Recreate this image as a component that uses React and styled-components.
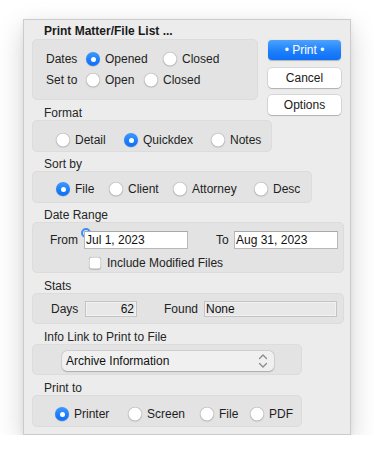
import React from 'react';
import styled, { createGlobalStyle, css } from 'styled-components';

const Global = createGlobalStyle`
  html, body { margin: 0; padding: 0; background: #ffffff; }
  body {
    font-family: "Liberation Sans", Arial, Helvetica, sans-serif;
    font-size: 12px;
    color: #222;
    -webkit-font-smoothing: antialiased;
  }
  #root { padding: 19px 0 0 23px; }
`;

const Window = styled.div`
  box-sizing: border-box;
  width: 328px;
  height: 416px;
  background: #ececec;
  border: 1px solid #cbcbcb;
  box-shadow: 0 10px 26px rgba(0, 0, 0, 0.18), 0 2px 6px rgba(0, 0, 0, 0.06);
  padding-left: 8px;
  display: grid;
  grid-template-columns: 236px 73px;
  grid-template-rows: 19px 61px 20px auto;
  align-content: start;
`;

const Title = styled.div`
  grid-column: 1;
  grid-row: 1;
  padding: 4px 0 0 12px;
  line-height: 15px;
  font-weight: bold;
  color: #1a1a1a;
`;

const SectionLabel = styled.div`
  line-height: 14px;
  height: 14px;
  padding-left: 12px;
  color: #262626;
  margin-top: ${(p) => p.$mt || 0}px;
`;

const FormatLabel = styled(SectionLabel)`
  grid-column: 1;
  grid-row: 3;
  align-self: end;
`;

const ButtonColumn = styled.div`
  grid-column: 2;
  grid-row: 1 / span 3;
  display: flex;
  flex-direction: column;
  gap: 7.5px;
  padding-top: 20px;
`;

const Button = styled.div`
  box-sizing: border-box;
  width: 73px;
  height: 20px;
  border-radius: 4px;
  display: flex;
  align-items: center;
  justify-content: center;
  font-size: 12px;
  ${(p) =>
    p.$primary
      ? css`
          color: #fff;
          background: linear-gradient(180deg, #4ba2fd 0%, #1f80fc 55%, #0d6ff6 100%);
          box-shadow: 0 0.5px 1px rgba(0, 0, 0, 0.25);
        `
      : css`
          color: #1a1a1a;
          background: #ffffff;
          box-shadow: 0 0 0 0.5px rgba(0, 0, 0, 0.18), 0 1px 1px rgba(0, 0, 0, 0.18);
        `}
`;

const Group = styled.div`
  box-sizing: border-box;
  width: ${(p) => p.$w}px;
  height: ${(p) => p.$h}px;
  padding-top: ${(p) => p.$pt || 0}px;
  background: #e3e3e3;
  border: 1px solid #dcdcdc;
  border-radius: 5px;
  display: flex;
  flex-direction: column;
`;

const DatesGroup = styled(Group)`
  grid-column: 1;
  grid-row: 2;
  gap: 7px;
`;

const Rest = styled.div`
  grid-column: 1 / -1;
  grid-row: 4;
  display: flex;
  flex-direction: column;
`;

const Row = styled.div`
  display: flex;
  align-items: center;
  height: ${(p) => p.$h || 14}px;
  padding-left: ${(p) => p.$pl || 0}px;
  margin-top: ${(p) => p.$mt || 0}px;
`;

const RowLabel = styled.div`
  flex: none;
  width: ${(p) => p.$w}px;
  margin-left: ${(p) => p.$ml || 0}px;
  color: #222;
  line-height: 14px;
`;

const OptionWrap = styled.div`
  flex: none;
  width: ${(p) => (p.$w ? `${p.$w}px` : 'auto')};
  display: flex;
  align-items: center;
  gap: 5px;
  line-height: 14px;
  color: #1e1e1e;
`;

const RadioDot = styled.span`
  flex: none;
  box-sizing: border-box;
  width: 14px;
  height: 14px;
  border-radius: 50%;
  position: relative;
  ${(p) =>
    p.$on
      ? css`
          background: linear-gradient(180deg, #3e9afd 0%, #1b7cfb 60%, #0f70f6 100%);
          box-shadow: 0 0.5px 1px rgba(0, 0, 0, 0.25);
          &::after {
            content: '';
            position: absolute;
            left: 4.5px;
            top: 4.5px;
            width: 5px;
            height: 5px;
            border-radius: 50%;
            background: #fff;
          }
        `
      : css`
          background: #ffffff;
          box-shadow: inset 0 0 0 0.5px rgba(0, 0, 0, 0.28), 0 0.5px 1.2px rgba(0, 0, 0, 0.22);
        `}
`;

const Radio = ({ label, on, w }) => (
  <OptionWrap $w={w}>
    <RadioDot $on={on} />
    <span>{label}</span>
  </OptionWrap>
);

const FieldWrap = styled.div`
  position: relative;
  flex: none;
`;

const FocusRing = styled.span`
  position: absolute;
  left: -3px;
  top: -3px;
  width: 6px;
  height: 6px;
  border: 2px solid #3d8ef2;
  border-radius: 50%;
  z-index: 0;
`;

const TextField = styled.div`
  position: relative;
  z-index: 1;
  box-sizing: border-box;
  width: ${(p) => p.$w}px;
  height: ${(p) => p.$h || 18}px;
  padding: 0 ${(p) => (p.$right ? 2 : 1)}px;
  text-align: ${(p) => (p.$right ? 'right' : 'left')};
  line-height: ${(p) => (p.$h || 18) - 2}px;
  font-size: 12px;
  color: #111;
  ${(p) =>
    p.$static
      ? css`
          background: #e8e8e8;
          border: 1px solid #c4c4c4;
          box-shadow: inset 0 0 0 1px #f2f2f2;
        `
      : css`
          background: #ffffff;
          border: 1px solid #b8b8b8;
          border-top-color: #a9a9a9;
        `}
`;

const CheckBox = styled.span`
  flex: none;
  box-sizing: border-box;
  width: 12px;
  height: 12px;
  border-radius: 3px;
  background: #fff;
  box-shadow: inset 0 0 0 0.5px rgba(0, 0, 0, 0.3), 0 0.5px 1px rgba(0, 0, 0, 0.18);
  margin-right: 6px;
`;

const Select = styled.div`
  box-sizing: border-box;
  width: 212px;
  height: 20px;
  margin-left: 29px;
  padding: 0 6px 0 4px;
  border-radius: 5px;
  background: #f0f0f0;
  box-shadow: 0 0 0 0.5px rgba(0, 0, 0, 0.12), 0 0.5px 1.5px rgba(0, 0, 0, 0.2);
  display: flex;
  align-items: center;
  justify-content: space-between;
  color: #111;
  font-size: 12px;
`;

const Chevrons = () => (
  <svg width="10" height="16" viewBox="0 0 10 16" fill="none">
    <path d="M1.5 5.5 L5 2 L8.5 5.5" stroke="#8a8a8a" strokeWidth="1.3" strokeLinecap="round" strokeLinejoin="round" />
    <path d="M1.5 10.5 L5 14 L8.5 10.5" stroke="#8a8a8a" strokeWidth="1.3" strokeLinecap="round" strokeLinejoin="round" />
  </svg>
);

export default function App() {
  return (
    <>
      <Global />
      <Window>
        <Title>Print Matter/File List ...</Title>
        <DatesGroup $w={226} $h={61} $pt={12}>
          <Row $pl={13}>
            <RowLabel $w={40}>Dates</RowLabel>
            <Radio label="Opened" on w={77} />
            <Radio label="Closed" />
          </Row>
          <Row $pl={13}>
            <RowLabel $w={40}>Set to</RowLabel>
            <Radio label="Open" w={58} />
            <Radio label="Closed" />
          </Row>
        </DatesGroup>
        <FormatLabel>Format</FormatLabel>
        <ButtonColumn>
          <Button $primary>• Print •</Button>
          <Button>Cancel</Button>
          <Button>Options</Button>
        </ButtonColumn>

        <Rest>
          <Group $w={240} $h={32} $pt={12}>
            <Row $pl={23}>
              <Radio label="Detail" w={68} />
              <Radio label="Quickdex" on w={87} />
              <Radio label="Notes" />
            </Row>
          </Group>

          <SectionLabel $mt={5}>Sort by</SectionLabel>
          <Group $w={280} $h={32} $pt={10}>
            <Row $pl={23}>
              <Radio label="File" on w={53} />
              <Radio label="Client" w={64} />
              <Radio label="Attorney" w={81} />
              <Radio label="Desc" />
            </Row>
          </Group>

          <SectionLabel $mt={5}>Date Range</SectionLabel>
          <Group $w={312} $h={51} $pt={8}>
            <Row $h={18} $pl={17}>
              <RowLabel $w={34}>From</RowLabel>
              <FieldWrap>
                <FocusRing />
                <TextField $w={104}>Jul 1, 2023</TextField>
              </FieldWrap>
              <RowLabel $w={18} $ml={28}>To</RowLabel>
              <FieldWrap>
                <TextField $w={104}>Aug 31, 2023</TextField>
              </FieldWrap>
            </Row>
            <Row $mt={7} $pl={56}>
              <CheckBox />
              <span>Include Modified Files</span>
            </Row>
          </Group>

          <SectionLabel $mt={6}>Stats</SectionLabel>
          <Group $w={312} $h={31} $pt={7}>
            <Row $h={16} $pl={18}>
              <RowLabel $w={34}>Days</RowLabel>
              <TextField $static $right $w={52} $h={16}>62</TextField>
              <RowLabel $w={40} $ml={27}>Found</RowLabel>
              <TextField $static $w={133} $h={16}>None</TextField>
            </Row>
          </Group>

          <SectionLabel $mt={6}>Info Link to Print to File</SectionLabel>
          <Group $w={270} $h={31} $pt={6}>
            <Select>
              <span>Archive Information</span>
              <Chevrons />
            </Select>
          </Group>

          <SectionLabel $mt={6}>Print to</SectionLabel>
          <Group $w={270} $h={32} $pt={11}>
            <Row $pl={22}>
              <Radio label="Printer" on w={73} />
              <Radio label="Screen" w={72} />
              <Radio label="File" w={50} />
              <Radio label="PDF" />
            </Row>
          </Group>
        </Rest>
      </Window>
    </>
  );
}
